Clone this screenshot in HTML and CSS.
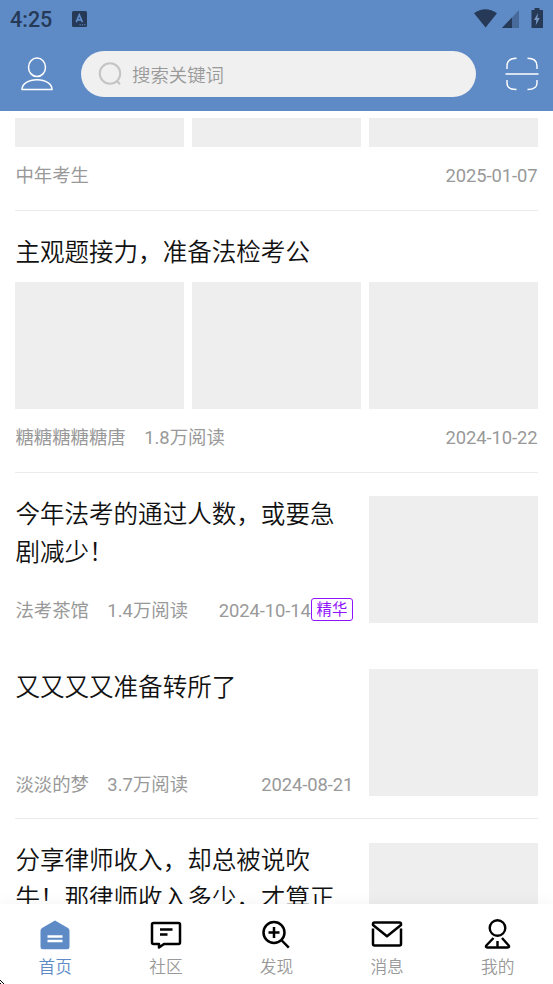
FILE: index.html
```html
<!DOCTYPE html>
<html lang="zh-CN">
<head>
<meta charset="utf-8">
<title>首页</title>
<link rel="stylesheet" href="styles.css">
</head>
<body>
<div class="app">
  <header class="header">
    <div class="status">
      <span class="clock">4:25</span>
      <svg class="keyboard" width="15" height="16" viewBox="0 0 15 16"><rect width="15" height="16" rx="1.5" fill="#263a57"/><path d="M4.2 11.2 7.3 4l3.1 7.2M5.3 8.8h4" fill="none" stroke="#5e8bc6" stroke-width="1.7"/><path d="M7.5 13.8h1.3m1 0h1.3m1 0h1.3" stroke="#5e8bc6"/></svg>
      <svg class="signals" width="72" height="22" viewBox="0 0 72 22">
        <path d="M1 5.2Q12.4-2.8 24 5.2L12.6 19.600Z" fill="#263a57"/>
        <path d="M46 2v18H29Z" fill="#486a9b"/><path d="M39 9.500V20H29Z" fill="#263a57"/>
        <path d="M58.500 2h3V0h5v2h3.500V20H58.500Z" fill="#263a57"/><path d="M65 5l-4 7h2.300l-.6 5.500 4-7.500h-2.300Z" fill="#7896c2"/>
      </svg>
    </div>
    <div class="toolbar">
      <svg class="profile" width="32" height="34" viewBox="0 0 32 34" fill="none" stroke="#fff" stroke-width="1.5"><ellipse cx="16" cy="10.3" rx="8.5" ry="9.3"/><path d="M1 32.500C1 27 7 22.800 16 22.800S31 27 31 32.500Z"/></svg>
      <div class="search">
        <svg width="24" height="24" viewBox="0 0 24 24" fill="none" stroke="#c4c4c4" stroke-width="2"><circle cx="12" cy="11.500" r="10.200"/><path d="m18.500 18.500 3.500 3.700"/></svg>
        <span>搜索关键词</span>
      </div>
      <svg class="scan" width="34" height="34" viewBox="0 0 34 34" fill="none" stroke="#fff" stroke-width="1.4"><path d="M2 12V9Q2 1.300 11.500 1.300M22.500 1.300Q32 1.300 32 9v3M2 23v3q0 6.500 9.500 6.500M22.500 32.500Q32 32.500 32 26v-3M.5 17h33"/></svg>
    </div>
  </header>

  <main class="feed">
    <article class="post first">
      <div class="gallery"><i></i><i></i><i></i></div>
      <div class="meta"><span>中年考生</span><time>2025-01-07</time></div>
    </article>
    <article class="post">
      <h2 class="title">主观题接力，准备法检考公</h2>
      <div class="gallery"><i></i><i></i><i></i></div>
      <div class="meta"><span>糖糖糖糖糖唐</span><span>1.8万阅读</span><time>2024-10-22</time></div>
    </article>
    <article class="post side plain">
      <div class="text">
        <h2 class="title">今年法考的通过人数，或要急剧减少！</h2>
        <div class="meta"><span>法考茶馆</span><span>1.4万阅读</span><time>2024-10-14</time><b class="tag">精华</b></div>
      </div>
      <i class="thumb"></i>
    </article>
    <article class="post side">
      <div class="text">
        <h2 class="title">又又又又准备转所了</h2>
        <div class="meta"><span>淡淡的梦</span><span>3.7万阅读</span><time>2024-08-21</time></div>
      </div>
      <i class="thumb"></i>
    </article>
    <article class="post side">
      <div class="text">
        <h2 class="title">分享律师收入，却总被说吹牛！那律师收入多少，才算正</h2>
      </div>
      <i class="thumb"></i>
    </article>
  </main>

  <nav class="tabs">
    <a class="tab active"><svg width="32" height="32" viewBox="0 0 32 32"><path d="M16 1.500 29 9q1.500 1 1.500 3v16q0 2.200-2.200 2.200H3.700q-2.200 0-2.200-2.200V12Q1.500 10 3 9Z" fill="#5e8bc6"/><path d="M8.500 17.500h15M8.500 22h15" stroke="#fff" stroke-width="2.300"/></svg><span>首页</span></a>
    <a class="tab"><svg width="32" height="32" viewBox="0 0 32 32" fill="none" stroke="#000" stroke-width="2.500" stroke-linejoin="round"><path d="M3.500 4h25q1.500 0 1.500 1.500v18q0 1.500-1.500 1.500H14l-5 3.500V25H3.500Q2 25 2 23.500v-18Q2 4 3.500 4Z"/><path d="M10 10.500h12.500M10 15.500h7.500"/></svg><span>社区</span></a>
    <a class="tab"><svg width="32" height="32" viewBox="0 0 32 32" fill="none" stroke="#000" stroke-width="2.500"><circle cx="14" cy="13.500" r="10.500"/><path d="M14 8v11M8.500 13.500h11M21.800 21.500l7 7.200"/></svg><span>发现</span></a>
    <a class="tab"><svg width="32" height="32" viewBox="0 0 32 32" fill="none" stroke="#000" stroke-width="2.500" stroke-linejoin="round"><path d="M2 9.500V25q0 1.500 1.500 1.500h25q1.500 0 1.500-1.500V9.500"/><path d="M2 6V5q0-1.500 1.500-1.500h25Q30 3.500 30 5v1L16 17.200Z"/></svg><span>消息</span></a>
    <a class="tab"><svg width="32" height="32" viewBox="0 0 32 32" fill="none" stroke="#000" stroke-width="2.400" stroke-linejoin="round"><circle cx="15.500" cy="9" r="7.800"/><path d="M11.500 19 4.300 26.500q-1 2 1 2h20.400q2 0 1-2L20 19M15.500 22V28.500"/></svg><span>我的</span></a>
  </nav>
  <svg class="pointer" width="4" height="4" viewBox="0 0 4 4"><path d="M0 0h1v1H0ZM1 1h1v1H1ZM2 2h1v1H2ZM3 3h1v1H3ZM0 3h1v1H0Z"/></svg>
</div>
</body>
</html>
```

FILE: styles.css
```css
* { box-sizing: border-box; }
body { margin: 0; background: #fff; font-family: Roboto, "Noto Sans CJK SC", sans-serif; }
svg { display: block; flex: none; }
.app { height: 984px; display: flex; flex-direction: column; overflow: hidden; position: relative; }
.header { height: 111px; flex: none; background: #5e8bc6; }
.status { height: 38px; display: flex; align-items: center; padding: 0 9px; }
.clock { width: 63px; font-size: 21.5px; font-weight: 500; line-height: 38px; color: #263a57; padding: 1px 0 0 1px; }
.keyboard { margin-top: -1px; }
.signals { margin-left: auto; margin-right: -1px; margin-top: -1px; }
.toolbar { height: 72px; display: flex; align-items: center; padding: 0 14px 0 21px; }
.profile { margin-right: 28px; }
.search { flex: 1; height: 46px; border-radius: 23px; background: #f0f0f0; display: flex; align-items: center; gap: 10px; padding-left: 17px; font-size: 18.4px; font-weight: 350; color: #999; margin-right: 29px; }
.search span { margin-top: -1px; }
.feed { flex: 1; min-height: 0; overflow: hidden; padding: 7.4px 15.4px 0; }
.post { border-bottom: 1px solid #ececec; padding: 23px 0 0; height: 262px; }
.first { height: 92.6px; padding: 0; }
.title { margin: 0; font-size: 24.55px; line-height: 38px; font-weight: 350; color: #111; }
.gallery { display: grid; grid-template-columns: repeat(3, 1fr); gap: 7.7px; margin-top: 10.2px; }
.gallery i { height: 126.9px; background: #eee; }
.first .gallery { margin: 0; }
.first .gallery i { height: 28.5px; }
.meta { display: flex; align-items: center; height: 26px; margin-top: 16px; font-size: 18.4px; line-height: 26px; color: #999; white-space: nowrap; }
.meta span { margin-right: 18.4px; }
.meta time { margin-left: auto; letter-spacing: -.08px; }
.side { display: flex; gap: 15.4px; height: 173.2px; padding-top: 23.3px; }
.plain { border-color: transparent; }
.text { flex: 1; height: 127px; display: flex; flex-direction: column; justify-content: space-between; }
.side .title { margin-top: -.3px; }
.side .meta { margin: 0 0 -1.2px; }
.thumb { width: 169px; height: 126.7px; flex: none; background: #eee; }
.tag { height: 23px; width: 42.5px; border: 1.5px solid #9013fe; border-radius: 3px; color: #9013fe; font-size: 15.4px; line-height: 22px; text-align: center; font-weight: 400; margin-top: -4px; }
.tabs { height: 80px; flex: none; display: flex; background: #fff; box-shadow: 0 0 15px rgba(0, 0, 0, .05); position: relative; clip-path: inset(-15px 0 0 0); }
.tab { flex: 1; display: flex; flex-direction: column; align-items: center; padding-top: 15px; color: #999; font-size: 16.7px; font-weight: 350; line-height: 24px; }
.tab span { margin-top: 4.5px; }
.active { color: #5e8bc6; }
.pointer { position: absolute; left: 0; bottom: 0; }
```
